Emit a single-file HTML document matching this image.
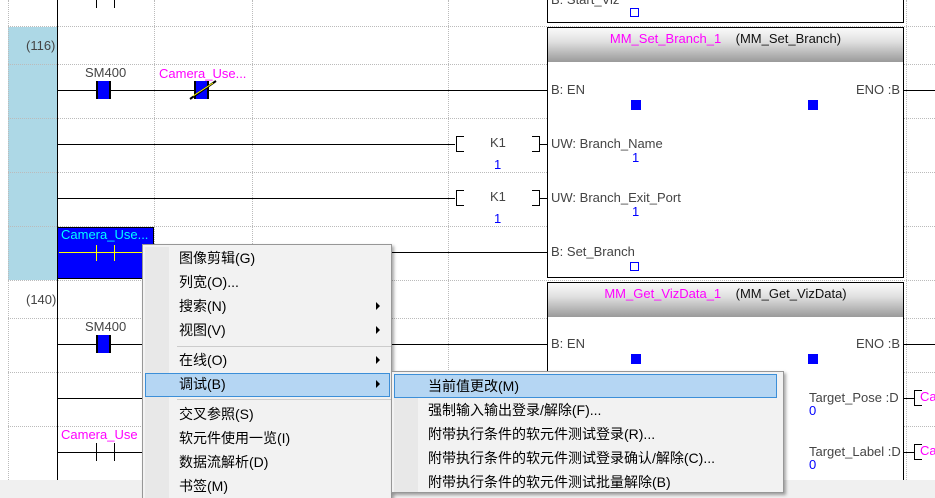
<!DOCTYPE html>
<html><head><meta charset="utf-8"><style>
*{margin:0;padding:0;box-sizing:border-box}
html{width:935px;height:498px;overflow:hidden}
body{width:935px;height:498px;overflow:hidden;background:#fff;position:relative;font-family:"Liberation Sans","Noto Sans CJK SC",sans-serif;font-size:13px;color:#333}
.a{position:absolute}
.hd{border-top:1px dotted #bbb;height:0;left:8px;width:927px}
.vd{border-left:1px dotted #bbb;width:0}
.rail{height:1px;background:#000}
.lbl{color:#444;font-size:13px}
.mag{color:#f0f;font-size:13px}
.blu{color:#00f;font-size:13px}
.box{border:1px solid #000;background:#fff;left:547px;width:357px}
.hdr{left:0;right:0;top:0;height:34px;background:linear-gradient(#fafafa,#e0e0e0 40%,#9a9a9a);text-align:center;font-size:13px;line-height:22px;color:#111}
.sq{width:10px;height:10px;background:#00f}
.osq{width:9px;height:9px;border:1px solid #00f;background:#fff}
.contact{width:15px;height:18px;border-left:2px solid #000;border-right:2px solid #000;background:#00f}
.menu{background:#f2f2f2;border:1px solid #979797;box-shadow:2px 2px 3px rgba(0,0,0,.35);font-size:14px;color:#000}
.it{position:absolute;left:36px;height:24px;line-height:24px;white-space:nowrap}
.arr{position:absolute;width:0;height:0;border-top:4px solid transparent;border-bottom:4px solid transparent;border-left:4px solid #000}
.br{width:8px;height:16px;border:1px solid #000}
</style></head><body>
<div class="a" style="left:8px;top:27px;width:49px;height:253px;background:#add8e6"></div>
<div class="a hd" style="top:26px"></div>
<div class="a hd" style="top:64px"></div>
<div class="a hd" style="top:118px"></div>
<div class="a hd" style="top:172px"></div>
<div class="a hd" style="top:226px"></div>
<div class="a hd" style="top:280px"></div>
<div class="a hd" style="top:318px"></div>
<div class="a hd" style="top:372px"></div>
<div class="a hd" style="top:426px"></div>
<div class="a vd" style="left:8px;top:0;height:480px"></div>
<div class="a vd" style="left:154px;top:0;height:480px"></div>
<div class="a vd" style="left:252px;top:0;height:480px"></div>
<div class="a vd" style="left:448px;top:0;height:480px"></div>
<div class="a vd" style="left:906px;top:0;height:480px"></div>
<div class="a" style="left:57px;top:0;width:1px;height:480px;background:#000"></div>
<div class="a" style="left:96px;top:0;width:1px;height:8px;background:#000"></div>
<div class="a" style="left:114px;top:0;width:1px;height:8px;background:#000"></div>

<div class="a lbl" style="left:26px;top:38px">(116)</div>
<div class="a lbl" style="left:26px;top:292px">(140)</div>

<div class="a rail" style="left:57px;top:90px;width:490px"></div>
<div class="a rail" style="left:57px;top:144px;width:398px"></div>
<div class="a rail" style="left:57px;top:198px;width:398px"></div>
<div class="a rail" style="left:57px;top:252px;width:490px"></div>
<div class="a lbl" style="left:85px;top:65px">SM400</div>
<div class="a contact" style="left:96px;top:81px"></div>
<div class="a mag" style="left:159px;top:66px">Camera_Use...</div>
<div class="a contact" style="left:194px;top:81px"></div>
<svg class="a" style="left:188px;top:78px" width="30" height="24"><line x1="2" y1="21" x2="28" y2="3" stroke="#000" stroke-width="2"/><line x1="5" y1="18" x2="25" y2="5" stroke="#ff0" stroke-width="1"/></svg>
<div class="a br" style="left:456px;top:136px;border-right:none"></div>
<div class="a br" style="left:532px;top:136px;border-left:none"></div>
<div class="a rail" style="left:540px;top:144px;width:7px"></div>
<div class="a lbl" style="left:490px;top:135px">K1</div>
<div class="a blu" style="left:494px;top:157px">1</div>
<div class="a br" style="left:456px;top:190px;border-right:none"></div>
<div class="a br" style="left:532px;top:190px;border-left:none"></div>
<div class="a rail" style="left:540px;top:198px;width:7px"></div>
<div class="a lbl" style="left:490px;top:189px">K1</div>
<div class="a blu" style="left:494px;top:211px">1</div>
<div class="a" style="left:57px;top:227px;width:97px;height:52px;background:#00f;border:1px solid #000"></div>
<div class="a" style="left:61px;top:227px;color:#0ff;font-size:13px">Camera_Use...</div>
<div class="a" style="left:59px;top:252px;width:85px;height:1px;background:#ff0"></div>
<div class="a" style="left:96px;top:245px;width:1px;height:16px;background:#ff0"></div>
<div class="a" style="left:114px;top:245px;width:1px;height:16px;background:#ff0"></div>

<div class="a rail" style="left:57px;top:344px;width:490px"></div>
<div class="a rail" style="left:57px;top:398px;width:100px"></div>
<div class="a rail" style="left:57px;top:452px;width:100px"></div>
<div class="a lbl" style="left:85px;top:319px">SM400</div>
<div class="a contact" style="left:96px;top:335px"></div>
<div class="a mag" style="left:61px;top:427px">Camera_Use</div>
<div class="a" style="left:96px;top:443px;width:1px;height:18px;background:#000"></div>
<div class="a" style="left:114px;top:443px;width:1px;height:18px;background:#000"></div>

<div class="a box" style="top:-2px;height:25px"></div>
<div class="a lbl" style="left:551px;top:-8px">B: Start_Viz</div>
<div class="a osq" style="left:630px;top:8px"></div>
<div class="a box" style="top:27px;height:251px"><div class="a hdr"><span style="color:#f0f">MM_Set_Branch_1</span>&nbsp;&nbsp;&nbsp;&nbsp;(MM_Set_Branch)</div></div>
<div class="a rail" style="left:904px;top:90px;width:31px"></div>
<div class="a lbl" style="left:551px;top:82px">B: EN</div>
<div class="a lbl" style="left:856px;top:82px">ENO :B</div>
<div class="a sq" style="left:631px;top:100px"></div>
<div class="a sq" style="left:808px;top:100px"></div>
<div class="a lbl" style="left:551px;top:136px">UW: Branch_Name</div>
<div class="a blu" style="left:632px;top:150px">1</div>
<div class="a lbl" style="left:551px;top:190px">UW: Branch_Exit_Port</div>
<div class="a blu" style="left:632px;top:204px">1</div>
<div class="a lbl" style="left:551px;top:244px">B: Set_Branch</div>
<div class="a osq" style="left:630px;top:262px"></div>
<div class="a box" style="top:282px;height:198px;border-bottom:none"><div class="a hdr"><span style="color:#f0f">MM_Get_VizData_1</span>&nbsp;&nbsp;&nbsp;&nbsp;(MM_Get_VizData)</div></div>
<div class="a rail" style="left:904px;top:344px;width:31px"></div>
<div class="a lbl" style="left:551px;top:336px">B: EN</div>
<div class="a lbl" style="left:856px;top:336px">ENO :B</div>
<div class="a sq" style="left:631px;top:354px"></div>
<div class="a sq" style="left:808px;top:354px"></div>
<div class="a lbl" style="left:809px;top:390px">Target_Pose :D</div>
<div class="a blu" style="left:809px;top:403px">0</div>
<div class="a lbl" style="left:809px;top:444px">Target_Label :D</div>
<div class="a blu" style="left:809px;top:457px">0</div>
<div class="a rail" style="left:904px;top:398px;width:10px"></div>
<div class="a br" style="left:914px;top:390px;border-right:none"></div>
<div class="a mag" style="left:920px;top:389px">Ca</div>
<div class="a rail" style="left:904px;top:452px;width:10px"></div>
<div class="a br" style="left:914px;top:444px;border-right:none"></div>
<div class="a mag" style="left:920px;top:443px">Ca</div>

<div class="a" style="left:0;top:480px;width:935px;height:18px;background:#f0f0f0"></div>

<div class="a menu" style="left:142px;top:244px;width:250px;height:254px;border-bottom:none">
 <div class="a" style="left:2px;top:2px;width:24px;height:252px;background:#e8e8e8"></div>
 <div class="it" style="top:1px">图像剪辑(G)</div>
 <div class="it" style="top:25px">列宽(O)...</div>
 <div class="it" style="top:49px">搜索(N)</div><div class="arr" style="left:233px;top:57px"></div>
 <div class="it" style="top:73px">视图(V)</div><div class="arr" style="left:233px;top:81px"></div>
 <div class="a" style="left:34px;top:101px;width:214px;height:1px;background:#ccc"></div>
 <div class="it" style="top:103px">在线(O)</div><div class="arr" style="left:233px;top:111px"></div>
 <div class="a" style="left:2px;top:128px;width:245px;height:24px;background:#b5d6f3;border:1px solid #3c8fd8"></div>
 <div class="it" style="top:127px">调试(B)</div><div class="arr" style="left:233px;top:135px"></div>
 <div class="a" style="left:34px;top:154px;width:214px;height:1px;background:#ccc"></div>
 <div class="it" style="top:157px">交叉参照(S)</div>
 <div class="it" style="top:181px">软元件使用一览(I)</div>
 <div class="it" style="top:205px">数据流解析(D)</div>
 <div class="it" style="top:229px">书签(M)</div>
</div>
<div class="a menu" style="left:391px;top:371px;width:393px;height:122px">
 <div class="a" style="left:2px;top:2px;width:24px;height:118px;background:#e8e8e8"></div>
 <div class="a" style="left:2px;top:2px;width:383px;height:24px;background:#b5d6f3;border:1px solid #3c8fd8"></div>
 <div class="it" style="top:2px">当前值更改(M)</div>
 <div class="it" style="top:26px">强制输入输出登录/解除(F)...</div>
 <div class="it" style="top:50px">附带执行条件的软元件测试登录(R)...</div>
 <div class="it" style="top:74px">附带执行条件的软元件测试登录确认/解除(C)...</div>
 <div class="it" style="top:98px">附带执行条件的软元件测试批量解除(B)</div>
</div>
</body></html>
